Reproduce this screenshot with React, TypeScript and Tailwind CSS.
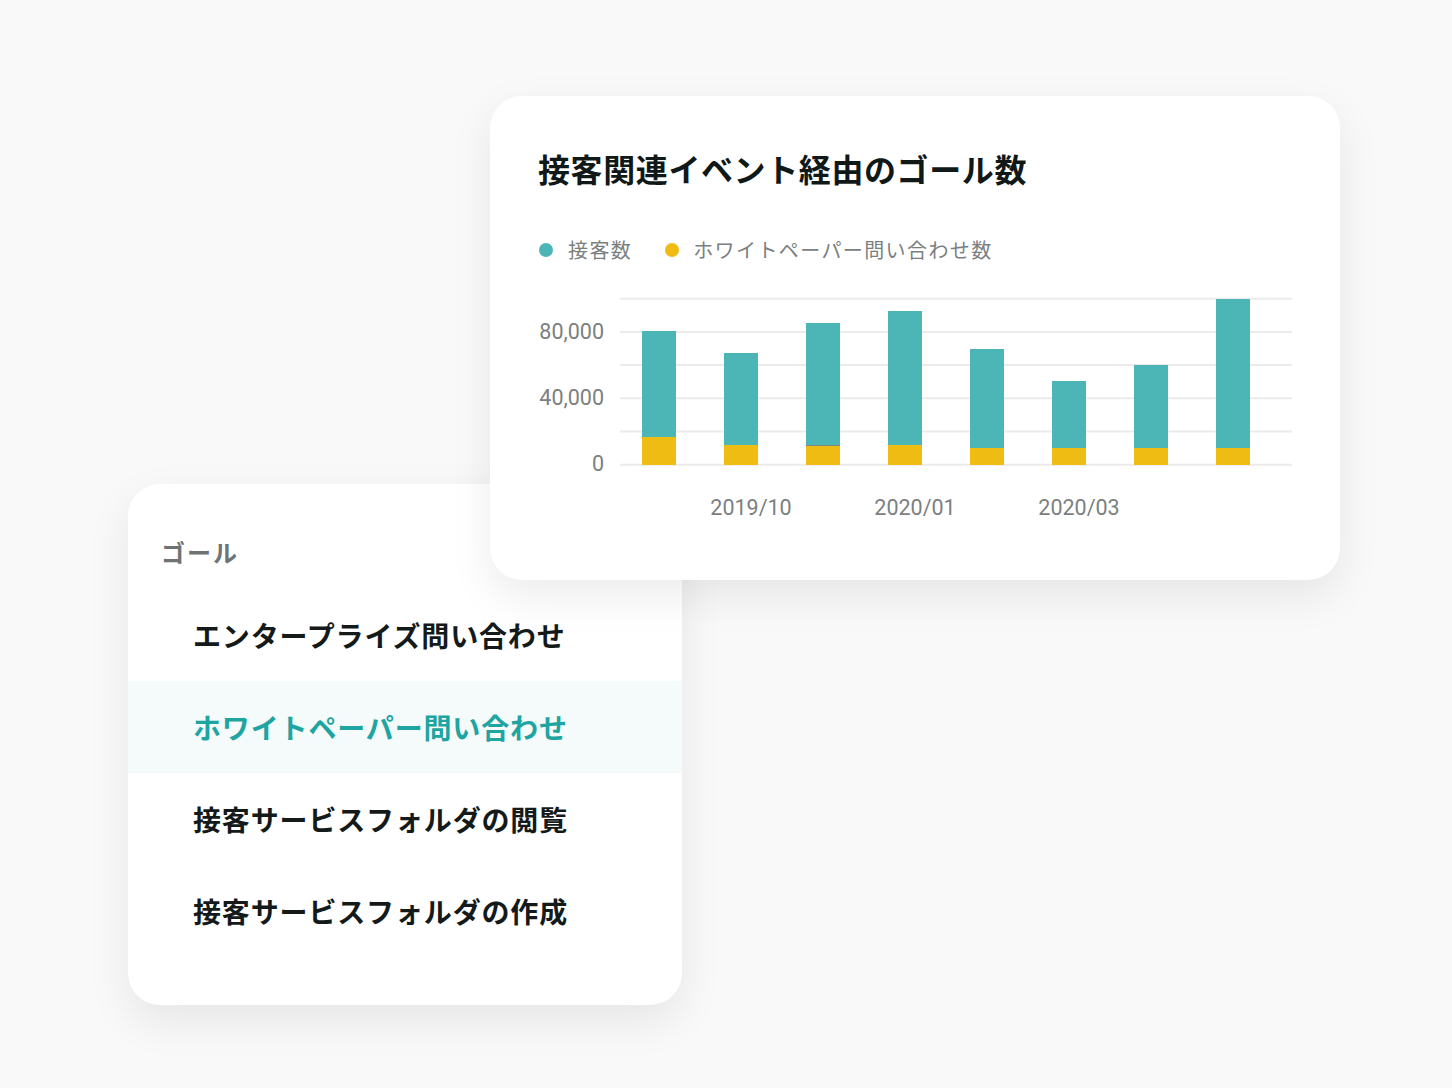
import React from 'react';

const JP = 'font-["Noto_Sans_CJK_JP","Noto_Sans",sans-serif]';

// stacked bars: x offset, top of the teal segment, top of the yellow segment
const bars = [
  { x: 104, total: 41, base: 147 },
  { x: 186, total: 63, base: 155 },
  { x: 268, total: 33, base: 156, split: true },
  { x: 350, total: 21, base: 155 },
  { x: 432, total: 59, base: 158 },
  { x: 514, total: 91, base: 158 },
  { x: 596, total: 75, base: 158 },
  { x: 678, total: 9, base: 158 },
];

const gridY = [8.7, 41.9, 75.1, 108.3, 141.5, 174.7];

const yLabels = [
  { y: 49, text: '80,000' },
  { y: 115, text: '40,000' },
  { y: 181, text: '0' },
];

const xLabels = [
  { x: 213, text: '2019/10' },
  { x: 377, text: '2020/01' },
  { x: 541, text: '2020/03' },
];

const goals = [
  'エンタープライズ問い合わせ',
  'ホワイトペーパー問い合わせ',
  '接客サービスフォルダの閲覧',
  '接客サービスフォルダの作成',
];

function GoalChart() {
  const bottom = 175;
  return (
    <svg width={754} height={240} className="block">
      {gridY.map(y => (
        <line key={y} x1={82} x2={754} y1={y} y2={y} stroke="#ebebeb" strokeWidth={2} />
      ))}
      {bars.map(b => (
        <g key={b.x}>
          <rect x={b.x} y={b.total} width={34} height={b.base - b.total} fill="#4cb6b6" />
          <rect x={b.x} y={b.base} width={34} height={bottom - b.base} fill="#efbc14" />
          {b.split && <rect x={b.x} y={b.base - 1} width={34} height={1} fill="#7d8585" />}
        </g>
      ))}
      {yLabels.map(l => (
        <text
          key={l.text}
          x={66}
          y={l.y}
          textAnchor="end"
          fill="#7b8080"
          fontSize={21.5}
          fontFamily="Roboto, sans-serif"
        >
          {l.text}
        </text>
      ))}
      {xLabels.map(l => (
        <text
          key={l.text}
          x={l.x}
          y={225}
          textAnchor="middle"
          fill="#7b8080"
          fontSize={21.5}
          fontFamily="Roboto, sans-serif"
        >
          {l.text}
        </text>
      ))}
    </svg>
  );
}

export default function App() {
  return (
    <div className={`relative w-[1452px] h-[1088px] bg-[#f9f9f9] overflow-hidden ${JP}`}>

      {/* ゴール一覧 */}
      <div className="absolute left-[128px] top-[484px] w-[554px] h-[521px] bg-white rounded-[32px] shadow-[0_16px_44px_rgba(0,0,0,0.08)] pt-[52px]">
        <h3 className="pl-[33px] text-[24px] leading-[32px] font-bold tracking-[2px] text-[#6e7373]">
          ゴール
        </h3>
        <ul className="mt-[21px]">
          {goals.map((g, i) => (
            <li
              key={g}
              className={`h-[92px] flex items-center pl-[65px] text-[28px] font-bold tracking-[0.85px] ${
                i === 1 ? 'bg-[#f5fafa] text-[#1ea5a2]' : 'text-[#141a1a]'
              }`}
            >
              {g}
            </li>
          ))}
        </ul>
      </div>

      {/* グラフカード */}
      <div className="absolute left-[490px] top-[96px] w-[850px] h-[484px] bg-white rounded-[32px] shadow-[0_16px_44px_rgba(0,0,0,0.08)] pl-[48px] pt-[52px]">
        <h2 className="text-[32px] leading-[40px] font-bold tracking-[0.6px] text-[#111818]">
          接客関連イベント経由のゴール数
        </h2>

        <div className="mt-[47px] h-[30px] flex items-center text-[20px] tracking-[1.4px] text-[#7b7f7f]">
          <span className="ml-px w-[14px] h-[14px] rounded-full bg-[#4cb6b6]" />
          <span className="ml-[15px]">接客数</span>
          <span className="ml-[33px] w-[14px] h-[14px] rounded-full bg-[#efbc14]" />
          <span className="ml-[14px]">ホワイトペーパー問い合わせ数</span>
        </div>

        <div className="mt-[25px]">
          <GoalChart />
        </div>
      </div>
    </div>
  );
}
